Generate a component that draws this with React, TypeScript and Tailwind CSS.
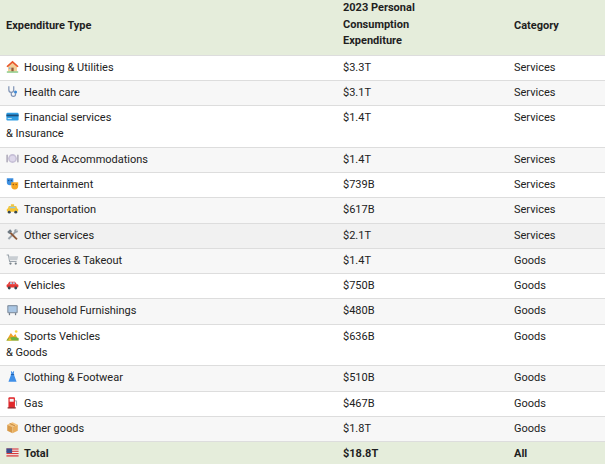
import type { ReactNode } from "react";

type Row = {
	icon: ReactNode;
	name: ReactNode;
	value: string;
	category: string;
	bg: string;
};

const Ico = ({ children }: { children: ReactNode }) => (
	<svg
		viewBox="0 0 16 16"
		width="13"
		height="13"
		className="inline-block shrink-0 mr-[5px] align-[-2px]"
	>
		{children}
	</svg>
);

const House = () => (
	<Ico>
		<path d="M2.5 7.5 L8 3 L13.5 7.5 V14 H2.5z" fill="#f4cd96" />
		<path d="M8 1 L0.5 7.6 L2 8.8 L8 3.6 L14 8.8 L15.5 7.6z" fill="#e8572c" />
		<rect x="6.6" y="9.4" width="2.8" height="4.6" fill="#8d5a3a" />
		<rect x="3.6" y="9.2" width="2" height="2" fill="#7fb7e6" />
		<rect x="1" y="14" width="14" height="1.6" fill="#7cc576" />
	</Ico>
);

const Stethoscope = () => (
	<Ico>
		<path
			d="M3.5 1.5 V6 a3 3 0 0 0 6 0 V1.5"
			fill="none"
			stroke="#7f93b5"
			strokeWidth="1.5"
		/>
		<path
			d="M6.5 9 V11.5 a2.6 2.6 0 0 0 5.2 0 V10"
			fill="none"
			stroke="#7f93b5"
			strokeWidth="1.5"
		/>
		<circle cx="11.7" cy="8.6" r="1.9" fill="#3e8ad6" />
	</Ico>
);

const Card = () => (
	<Ico>
		<rect x="0.5" y="3.5" width="15" height="9.5" rx="1.5" fill="#2e9de3" />
		<rect x="0.5" y="5.6" width="15" height="2.2" fill="#1b4f7c" />
		<rect x="2" y="10" width="5" height="1.2" fill="#cfe9fb" />
	</Ico>
);

const Plate = () => (
	<Ico>
		<rect x="0.6" y="3" width="1.5" height="10" rx="0.6" fill="#9a95a8" />
		<rect x="13.9" y="3" width="1.5" height="10" rx="0.6" fill="#9a95a8" />
		<circle cx="8" cy="8" r="5.4" fill="#c6bfd6" />
		<circle cx="8" cy="8" r="3.5" fill="#ddd7ea" />
	</Ico>
);

const Masks = () => (
	<Ico>
		<path d="M1 1.5 H9 V6 a4 4 0 0 1 -8 0z" fill="#3d8fe0" />
		<circle cx="3.3" cy="4.3" r="0.9" fill="#1b4f8c" />
		<circle cx="6.7" cy="4.3" r="0.9" fill="#1b4f8c" />
		<path d="M6.5 6.5 H15 V11 a4.25 4.25 0 0 1 -8.5 0z" fill="#f6a623" />
		<circle cx="9" cy="9.3" r="0.9" fill="#9b5a0e" />
		<circle cx="12.5" cy="9.3" r="0.9" fill="#9b5a0e" />
	</Ico>
);

const Taxi = () => (
	<Ico>
		<rect x="6" y="3" width="4" height="1.6" fill="#f0b400" />
		<path d="M3.5 5 H12.5 L14 8.5 H2z" fill="#f7c531" />
		<rect x="4.5" y="5.8" width="7" height="2" fill="#8fc6ee" />
		<rect x="1" y="8.2" width="14" height="3.8" rx="1" fill="#f7c531" />
		<circle cx="4" cy="12.5" r="1.8" fill="#37474f" />
		<circle cx="12" cy="12.5" r="1.8" fill="#37474f" />
	</Ico>
);

const Tools = () => (
	<Ico>
		<path d="M3 13.5 L12 4.5" stroke="#9aa3ab" strokeWidth="2.3" />
		<circle cx="12.5" cy="3.5" r="2.4" fill="#9aa3ab" />
		<circle cx="13.6" cy="2.4" r="1" fill="#fff" />
		<path d="M13.5 14 L5 5.5" stroke="#8d5a3a" strokeWidth="2.3" />
		<path d="M1.5 5 L5 1.5 L7.5 4 L4 7.5z" fill="#6d7880" />
	</Ico>
);

const Cart = () => (
	<Ico>
		<path
			d="M0.8 2.5 H3 L4.5 10.5 H13"
			fill="none"
			stroke="#9aa3ab"
			strokeWidth="1.4"
		/>
		<path d="M3.6 4 H15 L13.8 9 H4.5z" fill="#c9ced3" />
		<circle cx="5.5" cy="13" r="1.4" fill="#78828a" />
		<circle cx="12" cy="13" r="1.4" fill="#78828a" />
	</Ico>
);

const Car = () => (
	<Ico>
		<path d="M4 4.5 H11 L13.5 8 H2z" fill="#e53935" />
		<rect x="4.8" y="5.3" width="2.6" height="2" fill="#a7d7f7" />
		<rect x="8.2" y="5.3" width="2.6" height="2" fill="#a7d7f7" />
		<rect x="0.8" y="7.8" width="14.4" height="4" rx="1.2" fill="#e53935" />
		<circle cx="4" cy="12.3" r="1.8" fill="#37474f" />
		<circle cx="12" cy="12.3" r="1.8" fill="#37474f" />
	</Ico>
);

const Tv = () => (
	<Ico>
		<rect x="1.5" y="2.5" width="13" height="10" rx="1.5" fill="#8a98a8" />
		<rect x="3" y="4" width="10" height="7" rx="0.5" fill="#a9c6e4" />
		<rect x="3.5" y="12.5" width="1.5" height="2.5" fill="#6b7785" />
		<rect x="11" y="12.5" width="1.5" height="2.5" fill="#6b7785" />
	</Ico>
);

const Sports = () => (
	<Ico>
		<path d="M0.5 14 L6 5 L9 9 L11.5 6 L15.5 14z" fill="#f0a229" />
		<path d="M0.5 14 C4 9.5 9 9 15.5 11 V14z" fill="#6db33f" />
		<circle cx="12.5" cy="3" r="1.6" fill="#f7d23e" />
		<path d="M2 14 L5 10.5 L7 14z" fill="#f2c230" />
	</Ico>
);

const Dress = () => (
	<Ico>
		<path d="M6 1.5 L6.5 5 L3 14.5 H13 L9.5 5 L10 1.5 H9 L8 3.5 L7 1.5z" fill="#3f8fe8" />
		<rect x="6" y="5" width="4" height="1.2" fill="#1f5fb0" />
	</Ico>
);

const Fuel = () => (
	<Ico>
		<rect x="3" y="1.5" width="8" height="13" rx="1.2" fill="#e0282c" />
		<rect x="4.5" y="3.5" width="5" height="3.5" fill="#f4f4f4" />
		<path d="M11 6 H13 V12" fill="none" stroke="#9aa3ab" strokeWidth="1.2" />
		<rect x="2" y="13.8" width="10" height="1.6" fill="#8a2024" />
	</Ico>
);

const Box = () => (
	<Ico>
		<path d="M8 1.5 L14.5 4.5 L8 7.5 L1.5 4.5z" fill="#f4c27a" />
		<path d="M1.5 4.5 L8 7.5 V15 L1.5 12z" fill="#d89a4a" />
		<path d="M14.5 4.5 L8 7.5 V15 L14.5 12z" fill="#e8ad5c" />
		<path d="M4.5 3 L11 6" stroke="#b77a32" strokeWidth="1" />
	</Ico>
);

const Flag = () => (
	<Ico>
		<rect x="0.5" y="3" width="15" height="10" fill="#f1f1f1" />
		<rect x="0.5" y="3" width="15" height="1.4" fill="#d63a3a" />
		<rect x="0.5" y="5.8" width="15" height="1.4" fill="#d63a3a" />
		<rect x="0.5" y="8.6" width="15" height="1.4" fill="#d63a3a" />
		<rect x="0.5" y="11.4" width="15" height="1.6" fill="#d63a3a" />
		<rect x="0.5" y="3" width="7" height="5.6" fill="#3c4f8f" />
	</Ico>
);

const W = "bg-white";
const G = "bg-[#f7f7f7]";

const rows: Row[] = [
	{ icon: <House />, name: "Housing & Utilities", value: "$3.3T", category: "Services", bg: W },
	{ icon: <Stethoscope />, name: "Health care", value: "$3.1T", category: "Services", bg: G },
	{
		icon: <Card />,
		name: (
			<>
				Financial services
				<br />& Insurance
			</>
		),
		value: "$1.4T",
		category: "Services",
		bg: W,
	},
	{ icon: <Plate />, name: "Food & Accommodations", value: "$1.4T", category: "Services", bg: G },
	{ icon: <Masks />, name: "Entertainment", value: "$739B", category: "Services", bg: W },
	{ icon: <Taxi />, name: "Transportation", value: "$617B", category: "Services", bg: G },
	{ icon: <Tools />, name: "Other services", value: "$2.1T", category: "Services", bg: "bg-[#f1f1f1]" },
	{ icon: <Cart />, name: "Groceries & Takeout", value: "$1.4T", category: "Goods", bg: G },
	{ icon: <Car />, name: "Vehicles", value: "$750B", category: "Goods", bg: W },
	{ icon: <Tv />, name: "Household Furnishings", value: "$480B", category: "Goods", bg: G },
	{
		icon: <Sports />,
		name: (
			<>
				Sports Vehicles
				<br />& Goods
			</>
		),
		value: "$636B",
		category: "Goods",
		bg: W,
	},
	{ icon: <Dress />, name: "Clothing & Footwear", value: "$510B", category: "Goods", bg: G },
	{ icon: <Fuel />, name: "Gas", value: "$467B", category: "Goods", bg: W },
	{ icon: <Box />, name: "Other goods", value: "$1.8T", category: "Goods", bg: G },
];

const grid = "grid grid-cols-[337px_171px_1fr] border-b border-[#dddddd]";

export default function App() {
	return (
		<div className="w-[605px] h-[464px] overflow-hidden bg-white text-[11px] leading-[16.3px] text-[#222222] font-['Roboto','Liberation_Sans',sans-serif]">
			<div className={`${grid} bg-[#e5eddb] font-bold text-[#1f1f1f]`}>
				<div className="pl-[6px] self-center pb-[3px]">Expenditure Type</div>
				<div className="pl-[6px] pt-0 pb-[5px] leading-[16.5px]">
					2023 Personal
					<br />
					Consumption
					<br />
					Expenditure
				</div>
				<div className="pl-[6px] self-center pb-[3px]">Category</div>
			</div>
			{rows.map((r, i) => (
				<div key={i} className={`${grid} ${r.bg}`}>
					<div className="pl-[6px] py-[4px]">
						{r.icon}
						{r.name}
					</div>
					<div className="pl-[6px] py-[4px]">{r.value}</div>
					<div className="pl-[6px] py-[4px]">{r.category}</div>
				</div>
			))}
			<div className={`${grid} bg-[#e5eddb] font-bold text-[#1f1f1f]`}>
				<div className="pl-[6px] py-[4px]">
					<Flag />
					Total
				</div>
				<div className="pl-[6px] py-[4px]">$18.8T</div>
				<div className="pl-[6px] py-[4px]">All</div>
			</div>
		</div>
	);
}
